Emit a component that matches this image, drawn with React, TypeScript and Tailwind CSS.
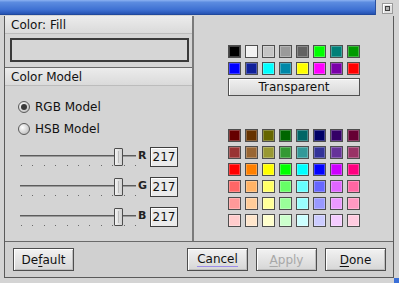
import React from "react";

const topColors = [
  ["#000000", "#f2f2f2", "#c4c4c4", "#9a9a9a", "#626262", "#00ff00", "#008078", "#009a00"],
  ["#0000ff", "#10209a", "#00ffff", "#0088a8", "#ffff00", "#ff00ff", "#7a00a8", "#ff0000"],
];

const bottomColors = [
  ["#660000", "#663300", "#666600", "#006600", "#006666", "#000066", "#330066", "#660033"],
  ["#993333", "#996633", "#999933", "#339933", "#339999", "#333399", "#663399", "#993366"],
  ["#ff0000", "#ff8000", "#ffff00", "#00ff00", "#00ffff", "#0000ff", "#cc00ff", "#ff0080"],
  ["#ff6666", "#ffb366", "#ffff66", "#66ff66", "#66ffff", "#6666ff", "#e066ff", "#ff66a3"],
  ["#ff9999", "#ffcc99", "#ffff99", "#99ff99", "#99ffff", "#9999ff", "#eb99ff", "#ff99c2"],
  ["#ffcccc", "#ffe6cc", "#ffffcc", "#ccffcc", "#ccffff", "#ccccff", "#f5ccff", "#ffcce0"],
];

function Swatch({ c }: { c: string }) {
  return (
    <div
      className="w-[13px] h-[13px] border border-[#4e4e4e] shadow-[inset_0_0_0_1px_rgba(255,255,255,0.25)]"
      style={{ backgroundColor: c }}
    />
  );
}

function Grid({ rows }: { rows: string[][] }) {
  return (
    <div className="flex flex-col gap-[4px]">
      {rows.map((r, i) => (
        <div key={i} className="flex gap-[4px]">
          {r.map((c, j) => (
            <Swatch key={j} c={c} />
          ))}
        </div>
      ))}
    </div>
  );
}

function Header({ text }: { text: string }) {
  return (
    <div className="h-[18px] flex items-center pl-[6px] bg-[linear-gradient(to_bottom,#ececec,#dadada)] border-b border-[#bcbcbc] text-[12px] text-[#111] leading-none">
      {text}
    </div>
  );
}

function Radio({ label, checked }: { label: string; checked?: boolean }) {
  return (
    <div className="flex items-center h-[13px] ml-[13px]">
      <div className="w-[12px] h-[12px] rounded-full border border-[#5a5a5a] bg-[radial-gradient(circle_at_35%_35%,#ffffff,#c8c8c8_70%,#a8a8a8)] flex items-center justify-center">
        {checked && <div className="w-[6px] h-[6px] rounded-full bg-[#3a3a3a]" />}
      </div>
      <span className="ml-[5px] text-[12px] leading-none text-[#111]">{label}</span>
    </div>
  );
}

function SliderRow({ label }: { label: string }) {
  const ticks = Array.from({ length: 11 });
  return (
    <div className="flex h-[20px] ml-[15px]">
      <div className="relative w-[116px] h-[20px]">
        <div className="absolute left-0 right-0 top-[8px] h-[2px] bg-[#5c5c5c] border-b border-[#9a9a9a]" />
        <div className="absolute left-[1px] right-0 top-[18px] flex justify-between">
          {ticks.map((_, i) => (
            <div key={i} className="w-[1px] h-[1px] bg-[#6a6a6a]" />
          ))}
        </div>
        <div className="absolute left-[94px] top-[1px] w-[9px] h-[18px] rounded-[1px] border border-[#4e4e4e] bg-[linear-gradient(to_right,#f4f4f4,#d0d0d0)]">
          <div className="absolute left-[3px] top-[2px] bottom-[2px] w-[1px] bg-[#bdbdbd]" />
        </div>
      </div>
      <span className="ml-[2px] mt-[3px] w-[12px] text-[11px] font-semibold leading-none text-[#222]">{label}</span>
      <div className="w-[28px] h-[20px] border border-[#3e3e3e] bg-[#ebebeb] flex items-center justify-center text-[12px] leading-none text-[#111] shadow-[inset_1px_1px_0_#ffffff]">
        217
      </div>
    </div>
  );
}

function Btn({ children, disabled }: { children: React.ReactNode; disabled?: boolean }) {
  return (
    <div
      className={
        "w-[61px] h-[23px] border border-[#4e4e4e] bg-[linear-gradient(to_bottom,#f2f2f2,#d6d6d6)] shadow-[inset_1px_1px_0_#ffffff,inset_-1px_-1px_0_#bdbdbd] flex items-center justify-center text-[12px] leading-none " +
        (disabled ? "text-[#a8a8a8]" : "text-[#111]")
      }
    >
      {children}
    </div>
  );
}

export default function App() {
  return (
    <div
      className="w-[399px] h-[283px] bg-[#d4d4d4] flex flex-col overflow-hidden relative"
      style={{ fontFamily: '"DejaVu Sans", Verdana, sans-serif' }}
    >
      {/* title row */}
      <div className="flex h-[16px] shrink-0">
        <div className="w-[376px] h-[15px] bg-[linear-gradient(to_bottom,#8cb2f2_0%,#5c8ce0_15%,#3e70d2_65%,#2856b6_90%,#1c4290_100%)] border-r border-[#2a4f9e]" />
        <div className="ml-[6px] mt-[3px] w-[11px] h-[11px] border border-[#9a9a9a] bg-[#e2e2e2] shadow-[inset_1px_1px_0_#ffffff] flex items-center justify-center">
          <div className="w-[5px] h-[5px] border border-[#404040] bg-[#b0b0b0]" />
        </div>
      </div>

      {/* window frame */}
      <div className="ml-[4px] w-[390px] h-[262px] border-l border-r border-b border-[#5a5a5a] flex flex-col shrink-0">
        <div className="flex h-[226px] border-b border-[#6a6a6a]">
          {/* left panel */}
          <div className="w-[189px] flex flex-col border-r-2 border-[#7a7a7a]">
            <Header text="Color: Fill" />
            <div className="mt-[4px] ml-[5px] w-[179px] h-[24px] border-2 border-[#3a3a3a] bg-[#d6d6d6]" />
            <div className="mt-[5px] border-t border-[#6a6a6a]" />
            <Header text="Color Model" />
            <div className="mt-[14px] flex flex-col gap-[9px]">
              <Radio label="RGB Model" checked />
              <Radio label="HSB Model" />
            </div>
            <div className="mt-[12px] flex flex-col gap-[10px]">
              <SliderRow label="R" />
              <SliderRow label="G" />
              <SliderRow label="B" />
            </div>
          </div>
          {/* right panel */}
          <div className="flex-1 flex flex-col pl-[34px] pt-[29px]">
            <Grid rows={topColors} />
            <div className="mt-[3px] w-[132px] h-[18px] border border-[#505050] bg-[linear-gradient(to_bottom,#f0f0f0,#d8d8d8)] shadow-[inset_1px_1px_0_#ffffff] flex items-center justify-center text-[12px] leading-none text-[#111]">
              Transparent
            </div>
            <div className="mt-[33px]">
              <Grid rows={bottomColors} />
            </div>
          </div>
        </div>
        {/* bottom bar */}
        <div className="flex-1 flex items-start pt-[6px] pl-[8px] pr-[7px] bg-[#d0d0d0]">
          <Btn>
            De<span className="underline underline-offset-2">f</span>ault
          </Btn>
          <div className="flex-1" />
          <div className="flex gap-[8px]">
            <Btn>
              <span className="border-b border-[#9c8ce8] pb-[1px]">Cancel</span>
            </Btn>
            <Btn disabled>
              <span className="underline underline-offset-2">A</span>pply
            </Btn>
            <Btn>
              <span className="underline underline-offset-2">D</span>one
            </Btn>
          </div>
        </div>
      </div>
      <div className="absolute right-0 bottom-0 w-[5px] h-[5px] bg-[#3a6fd8]" />
    </div>
  );
}
